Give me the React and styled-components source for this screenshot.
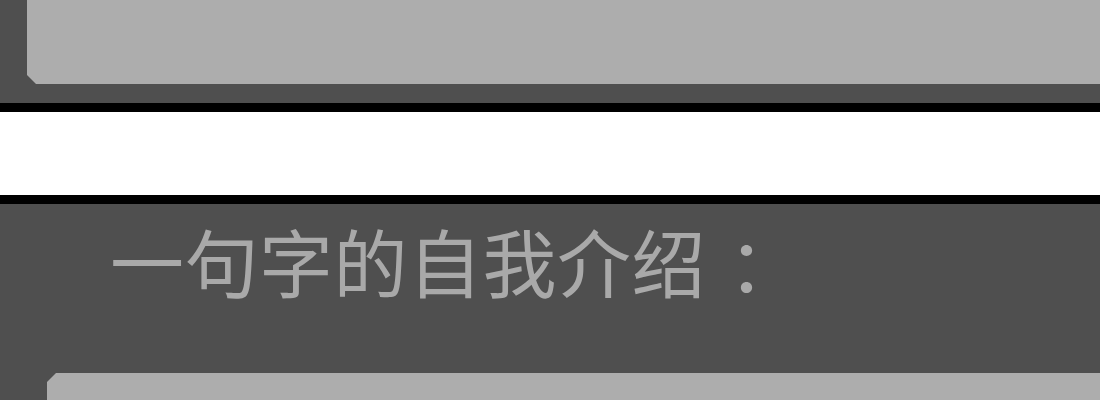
import React from "react";
import styled, { createGlobalStyle } from "styled-components";

const Global = createGlobalStyle`
  html, body { margin: 0; padding: 0; background: #4f4f4f; }
  body { font-family: "Noto Sans CJK SC", "Noto Sans", sans-serif; overflow: hidden; }
`;

const Page = styled.div`
  width: 1100px;
  height: 400px;
  display: flex;
  flex-direction: column;
  overflow: hidden;
`;

const Section = styled.section`
  background: #4f4f4f;
  padding-left: ${(p) => p.$indent}px;
  display: flex;
  flex-direction: column;
  flex: ${(p) => (p.$grow ? 1 : "none")};
  height: ${(p) => (p.$h ? `${p.$h}px` : "auto")};
  box-sizing: border-box;
`;

const Card = styled.div`
  background: #adadad;
  height: ${(p) => p.$h}px;
  clip-path: ${(p) =>
    p.$cut === "bottom"
      ? "polygon(0 0, 100% 0, 100% 100%, 9px 100%, 0 calc(100% - 9px))"
      : "polygon(9px 0, 100% 0, 100% 100%, 0 100%, 0 9px)"};
`;

const Divider = styled.div`
  height: 83px;
  background: #ffffff;
  border-top: 9px solid #000;
  border-bottom: 9px solid #000;
  flex: none;
`;

const Heading = styled.h2`
  margin: 0;
  padding: 6px 0 0 63px;
  height: 169px;
  box-sizing: border-box;
  font-family: "Noto Sans CJK SC", sans-serif;
  font-weight: 400;
  font-size: 74px;
  line-height: 100px;
  letter-spacing: 0.5px;
  color: #a9a9a9;
  white-space: nowrap;
`;

const Colon = styled.span`
  display: inline-block;
  padding-left: 22px;
`;

export default function App() {
  return (
    <Page>
      <Global />
      <Section $indent={27} $h={103}>
        <Card $h={84} $cut="bottom" />
      </Section>
      <Divider />
      <Section $indent={47} $grow>
        <Heading>
          一句字的自我介绍<Colon>：</Colon>
        </Heading>
        <Card $h={40} $cut="top" />
      </Section>
    </Page>
  );
}
